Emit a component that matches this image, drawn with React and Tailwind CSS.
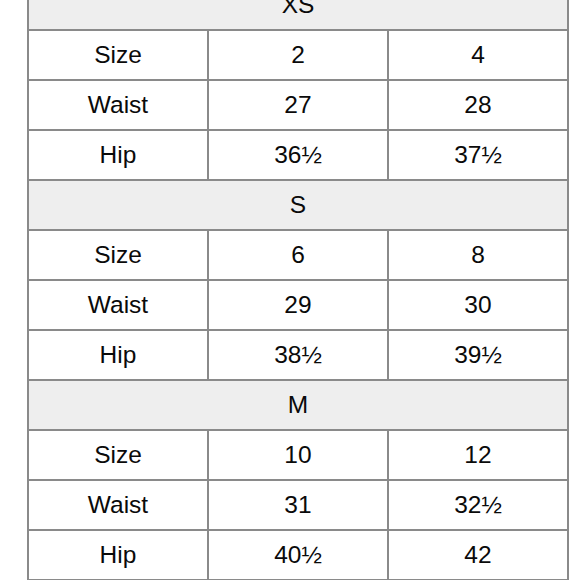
import React from 'react'

// size chart, three groups of rows
const groups = [
  { label: 'XS', rows: [['Size', '2', '4'], ['Waist', '27', '28'], ['Hip', '36½', '37½']] },
  { label: 'S', rows: [['Size', '6', '8'], ['Waist', '29', '30'], ['Hip', '38½', '39½']] },
  { label: 'M', rows: [['Size', '10', '12'], ['Waist', '31', '32½'], ['Hip', '40½', '42']] },
]

export default function App() {
  return (
    <div className="w-[580px] h-[580px] overflow-hidden bg-white" style={{ fontFamily: '"Liberation Sans", Arial, sans-serif' }}>
      <table className="table-fixed border-collapse w-[540px] ml-[27px] -mt-[21px] text-[24.5px] text-[#0a0a0a]">
        <colgroup>
          <col className="w-[180px]" />
          <col className="w-[180px]" />
          <col className="w-[180px]" />
        </colgroup>
        <tbody>
          {groups.map((g) => (
            <React.Fragment key={g.label}>
              <tr className="h-[50px]">
                <td colSpan={3} className="border-2 border-[#8a8a8a] bg-[#eeeeee] text-center p-0">{g.label}</td>
              </tr>
              {g.rows.map((r) => (
                <tr key={g.label + r[0]} className="h-[50px]">
                  {r.map((c, i) => (
                    <td key={i} className="border-2 border-[#8a8a8a] text-center p-0">{c}</td>
                  ))}
                </tr>
              ))}
            </React.Fragment>
          ))}
        </tbody>
      </table>
    </div>
  )
}
